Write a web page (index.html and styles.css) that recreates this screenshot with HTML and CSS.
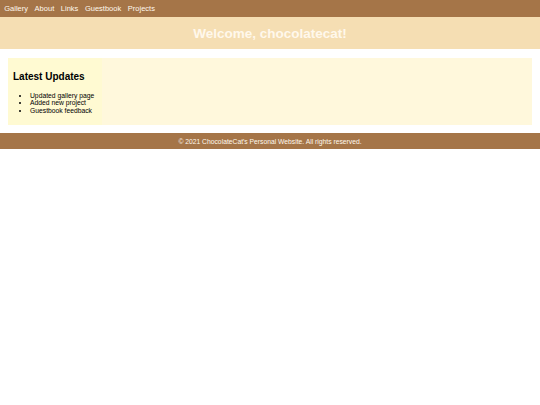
FILE: index.html
```html
<!DOCTYPE html>
<html lang="en">
<head>
<meta charset="utf-8">
<title>ChocolateCat's Personal Website</title>
<link rel="stylesheet" href="styles.css">
</head>
<body>
<nav class="nav">
  <a href="#">Gallery</a>
  <a href="#">About</a>
  <a href="#">Links</a>
  <a href="#">Guestbook</a>
  <a href="#">Projects</a>
</nav>
<header class="header">
  <h1>Welcome, chocolatecat!</h1>
</header>
<main class="main">
  <aside class="sidebar">
    <h2>Latest Updates</h2>
    <ul>
      <li>Updated gallery page</li>
      <li>Added new project</li>
      <li>Guestbook feedback</li>
    </ul>
  </aside>
  <section class="content"></section>
</main>
<footer class="footer">© 2021 ChocolateCat's Personal Website. All rights reserved.</footer>
</body>
</html>
```
FILE: styles.css
```css
html, body {
  margin: 0;
  padding: 0;
  background: #ffffff;
  font-family: "Liberation Sans", Arial, sans-serif;
}
.nav {
  background: #a57548;
  height: 17px;
  line-height: 17px;
  padding: 0 0 0 2px;
  font-size: 7.5px;
}
.nav a {
  color: #fff8ec;
  text-decoration: none;
  padding: 0 2.25px;
}
.header {
  background: #f5deb3;
  height: 32px;
  display: flex;
  align-items: center;
  justify-content: center;
}
.header h1 {
  margin: 0;
  font-size: 13.5px;
  font-weight: bold;
  color: #fff8ec;
}
.main {
  margin: 9px 8px 8px;
  height: 67px;
  display: flex;
  background: #fff8dc;
}
.sidebar {
  width: 84px;
  padding: 5px;
  background: #fffad2;
}
.sidebar h2 {
  margin: 8px 0 8.5px;
  font-size: 10px;
  line-height: 12px;
  color: #000;
}
.sidebar ul {
  margin: 0;
  padding-left: 17px;
  font-size: 6.75px;
  line-height: 7.75px;
  color: #000;
}
.content {
  flex: 1;
}
.footer {
  background: #a57548;
  color: #fff8ec;
  height: 16px;
  display: flex;
  align-items: center;
  justify-content: center;
  font-size: 6.75px;
}
```
